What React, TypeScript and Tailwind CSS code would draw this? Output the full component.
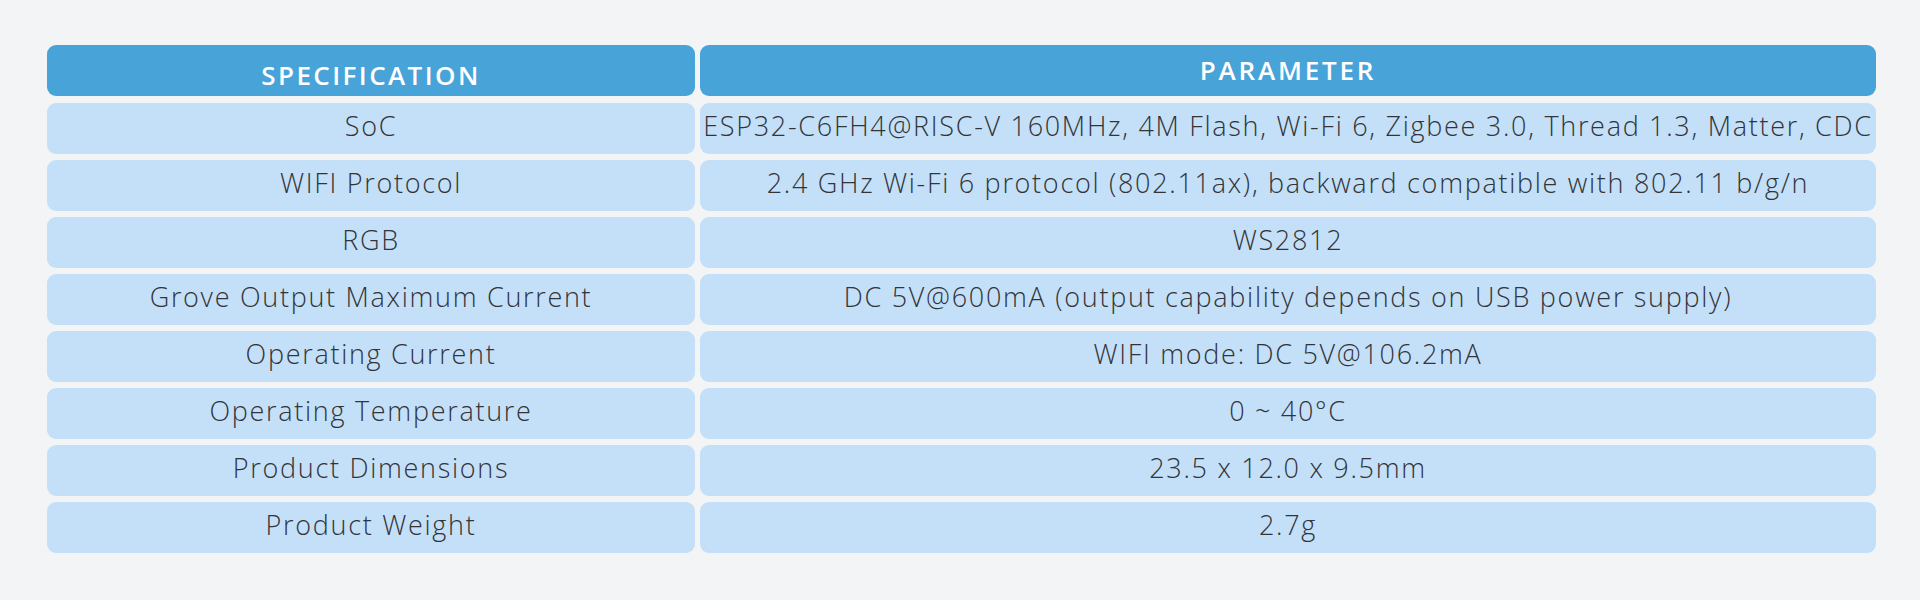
import React from "react";

const rows: [string, string][] = [
  ["SoC", "ESP32-C6FH4@RISC-V 160MHz, 4M Flash, Wi-Fi 6, Zigbee 3.0, Thread 1.3, Matter, CDC"],
  ["WIFI Protocol", "2.4 GHz Wi-Fi 6 protocol (802.11ax), backward compatible with 802.11 b/g/n"],
  ["RGB", "WS2812"],
  ["Grove Output Maximum Current", "DC 5V@600mA (output capability depends on USB power supply)"],
  ["Operating Current", "WIFI mode: DC 5V@106.2mA"],
  ["Operating Temperature", "0 ~ 40°C"],
  ["Product Dimensions", "23.5 x 12.0 x 9.5mm"],
  ["Product Weight", "2.7g"],
];

export default function App() {
  return (
    <div
      className="w-[1920px] h-[600px] bg-[#f3f4f5] pt-[45px] pl-[47px] pr-[44px]"
      style={{ fontFamily: "'Open Sans', Inter, sans-serif" }}
    >
      <div className="grid grid-cols-[648px_1176px] gap-x-[5px] gap-y-[6px]">
        <div className="h-[51px] mb-px rounded-[9px] bg-[#48a3d9] flex items-center justify-center pt-[9px] text-white text-[26px] font-semibold tracking-[2.4px]">
          SPECIFICATION
        </div>
        <div className="h-[51px] mb-px rounded-[9px] bg-[#48a3d9] flex items-center justify-center pb-px text-white text-[26px] font-semibold tracking-[2.8px]">
          PARAMETER
        </div>
        {rows.map(([k, v]) => (
          <React.Fragment key={k}>
            <div className="h-[51px] rounded-[9px] bg-[#c4e0f8] flex items-center justify-center pb-[5px] text-[#333438] text-[27px] font-light tracking-[1.7px] whitespace-nowrap">
              {k}
            </div>
            <div className="h-[51px] rounded-[9px] bg-[#c4e0f8] flex items-center justify-center pb-[5px] text-[#333438] text-[27px] font-light tracking-[1.7px] whitespace-nowrap">
              {v}
            </div>
          </React.Fragment>
        ))}
      </div>
    </div>
  );
}
